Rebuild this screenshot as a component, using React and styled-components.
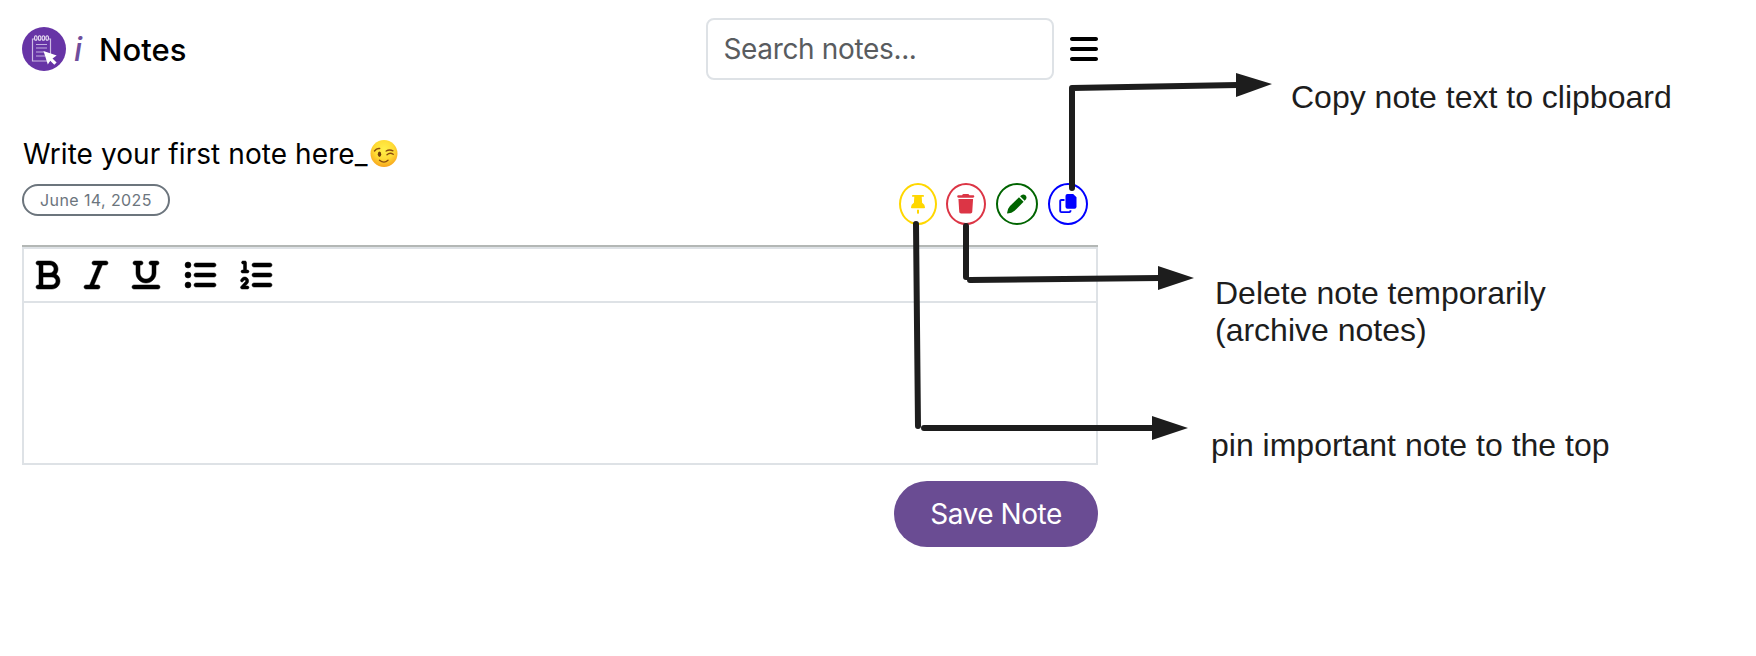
import React from 'react';
import styled, { createGlobalStyle } from 'styled-components';
import { FaBars, FaTrash, FaBold, FaItalic, FaUnderline, FaListUl, FaListOl } from 'react-icons/fa6';

const GlobalStyle = createGlobalStyle`
  *, *::before, *::after { box-sizing: border-box; }
  body { margin: 0; background: #fff; color: #000; font-family: Inter, "Liberation Sans", sans-serif; }
`;

const Page = styled.div`
  position: relative;
  width: 1756px;
  height: 656px;
  padding: 18px 0 0 22px;
  overflow: hidden;
`;

const NotesApp = styled.main`
  width: 1076px;
  display: flex;
  flex-direction: column;
`;

const Header = styled.header`
  height: 62px;
  display: flex;
  align-items: center;
  justify-content: space-between;
`;

const Brand = styled.div`
  display: flex;
  align-items: center;
`;

const BrandInitial = styled.span`
  margin: 1px 0 0 8px;
  width: 25px;
  font: italic 500 32px/40px Inter, sans-serif;
  color: #6f4e9c;
`;

const BrandName = styled.span`
  margin-top: 1px;
  font-size: 31px;
  line-height: 40px;
  font-weight: 500;
`;

const HeaderTools = styled.div`
  display: flex;
  align-items: center;
  gap: 16px;
`;

const SearchInput = styled.input`
  width: 348px;
  height: 62px;
  padding: 0 15.5px;
  border: 2px solid #dee2e6;
  border-radius: 8px;
  font: 400 28px/40px Inter, sans-serif;
  letter-spacing: -0.35px;
  outline: none;
  &::placeholder { color: #595c5f; opacity: 1; }
`;

const IconButton = styled.button`
  display: flex;
  padding: 0;
  border: 0;
  background: none;
  color: #000;
  svg { width: ${({ $width }) => $width}px; height: 32px; overflow: visible; }
`;

const NoteTitle = styled.h2`
  margin: 54px 0 0 1px;
  height: 40px;
  display: flex;
  align-items: center;
  gap: 2px;
  font-size: 28px;
  line-height: 40px;
  font-weight: 400;
  letter-spacing: 0.08px;
`;

const NoteMeta = styled.div`
  height: 44px;
  margin-top: 9px;
  padding-right: 10px;
  display: flex;
  justify-content: space-between;
`;

const DateBadge = styled.span`
  width: 148px;
  height: 32px;
  margin-top: 1px;
  border: 2px solid #6c757d;
  border-radius: 16px;
  display: flex;
  align-items: center;
  justify-content: center;
  color: #6c757d;
  font-size: 16px;
  letter-spacing: 0.4px;
`;

const Actions = styled.div`
  display: flex;
`;

const ActionButton = styled.button`
  width: ${({ $width }) => $width}px;
  height: 42px;
  margin-left: ${({ $gap }) => $gap}px;
  padding: 0;
  display: flex;
  align-items: center;
  justify-content: center;
  border: 2px solid currentColor;
  border-radius: 50%;
  background: #fff;
  color: ${({ $color }) => $color};
  font-size: 19.5px;
`;

const Editor = styled.section`
  margin-top: 18px;
  height: 220px;
  border-top: 2px solid #b3b7b5;
`;

const EditorFrame = styled.div`
  height: 218px;
  border: 2px solid #dee2e6;
`;

const Toolbar = styled.div`
  height: 54px;
  padding-left: 12px;
  display: flex;
  align-items: center;
  gap: 24px;
  border-bottom: 2px solid #dee2e6;
  svg { stroke: currentColor; stroke-width: 8px; }
`;

const SaveButton = styled.button`
  align-self: flex-end;
  width: 204px;
  height: 66px;
  margin-top: 16px;
  border: 0;
  border-radius: 33px;
  background: #6a4c93;
  color: #fff;
  font: 400 28px/40px Inter, sans-serif;
  letter-spacing: -0.45px;
`;

const AnnotationLayer = styled.svg`
  position: absolute;
  inset: 0;
  pointer-events: none;
`;

const Callout = styled.p`
  position: absolute;
  left: ${({ $x }) => $x}px;
  top: ${({ $y }) => $y}px;
  margin: 0;
  color: #1d1d1d;
  font: 400 32px/37px "Liberation Sans", Arial, sans-serif;
  white-space: nowrap;
`;

const Logo = () => (
  <svg width="44" height="44" viewBox="0 0 44 44" fill="none">
    <circle cx="22" cy="22" r="22" fill="#6734a6" />
    <path d="M12 12h-1.5v22H28M27 12h1.5v15" stroke="#cdbbe3" strokeWidth="1.2" />
    {[13.8, 17.6, 21.4, 25.2].map((x) => (
      <ellipse key={x} cx={x} cy="11" rx="1.3" ry="2.3" stroke="#e5daf0" strokeWidth="1.1" />
    ))}
    <path d="M14 17.5h11M14 21h11M14 25h8M14 29h9" stroke="#c3afe0" strokeWidth="1.1" />
    <path d="M21.5 24l13.2 4.6-4.2 2.8 4.1 4.1-2.3 2.3-4.1-4.1-2.4 3.9z" fill="#fff" />
  </svg>
);

const WinkFace = () => (
  <svg width="28" height="28" viewBox="0 0 28 28" fill="none">
    <defs>
      <radialGradient id="face" cx="50%" cy="35%" r="65%">
        <stop offset="0" stopColor="#fff04a" />
        <stop offset="0.55" stopColor="#ffdc35" />
        <stop offset="1" stopColor="#f8a51d" />
      </radialGradient>
    </defs>
    <circle cx="14" cy="13.5" r="13.5" fill="url(#face)" />
    <ellipse cx="9.5" cy="14.2" rx="1.7" ry="2.7" fill="#713d0b" />
    <path d="M4.5 11q2-3 5.2-2.5M16.2 11q3-2 6.8-.2M17 14.8q3-2.8 6.2-.5M9.500 20.200q4.500 3.800 8.500.1" stroke="#8b4c0e" strokeWidth="1.4" strokeLinecap="round" />
  </svg>
);

const PinIcon = () => (
  <svg width="14" height="19" viewBox="0 0 14 19" fill="currentColor">
    <path d="M1.8 0h10.400q.8 0 .8.900t-.8.900h-1.500l.4 6q2.900 1.600 2.900 4.400v.3q0 .7-.8.7H.8q-.8 0-.8-.7v-.3Q0 9.400 2.900 7.800l.4-6H1.800Q1 1.800 1 .9t.8-.9z" />
    <path d="M6 14.800h2v2.800q0 1.400-1 1.400t-1-1.400z" />
  </svg>
);

const PencilIcon = () => (
  <svg width="20" height="20" viewBox="0 0 20 20" fill="currentColor">
    <path d="M12 3.200 16.600 7.800 7.600 16.800Q4.800 19.300.6 19.600q-.5 0-.5-.5.3-4.300 2.900-7z" />
    <path d="M13.100 2.200q2.700-3.100 5.400-.9 2.400 2.800-.9 5.500z" />
  </svg>
);

const CopyIcon = () => (
  <svg width="18" height="20" viewBox="0 0 18 20" fill="none">
    <path d="M8.500 0h5.700L17.500 3.300V12.700q0 2-2 2h-7q-2 0-2-2V2q0-2 2-2z" fill="currentColor" />
    <path d="M5.500 6H2.500Q1.200 6 1.200 7.200V16.900Q1.200 18.100 2.500 18.100H10.300Q11.500 18.100 11.500 16.300" stroke="currentColor" strokeWidth="1.9" />
  </svg>
);

const actions = [
  { label: 'Pin', Icon: PinIcon, color: '#ffd700', width: 38, gap: 0 },
  { label: 'Delete', Icon: FaTrash, color: '#dc3545', width: 40, gap: 9 },
  { label: 'Edit', Icon: PencilIcon, color: '#006400', width: 42, gap: 10 },
  { label: 'Copy', Icon: CopyIcon, color: '#0000ff', width: 40, gap: 10 },
];

const tools = [
  { label: 'Bold', Icon: FaBold, width: 24 },
  { label: 'Italic', Icon: FaItalic, width: 24 },
  { label: 'Underline', Icon: FaUnderline, width: 28 },
  { label: 'Bulleted list', Icon: FaListUl, width: 32 },
  { label: 'Numbered list', Icon: FaListOl, width: 32 },
];

export default function App() {
  return (
    <Page>
      <GlobalStyle />
      <NotesApp>
        <Header>
          <Brand>
            <Logo />
            <BrandInitial>i</BrandInitial>
            <BrandName>Notes</BrandName>
          </Brand>
          <HeaderTools>
            <SearchInput placeholder="Search notes..." />
            <IconButton $width={28} aria-label="Menu"><FaBars /></IconButton>
          </HeaderTools>
        </Header>
        <NoteTitle>Write your first note here_<WinkFace /></NoteTitle>
        <NoteMeta>
          <DateBadge>June 14, 2025</DateBadge>
          <Actions>
            {actions.map(({ label, Icon, color, width, gap }) => (
              <ActionButton key={label} aria-label={label} $color={color} $width={width} $gap={gap}><Icon /></ActionButton>
            ))}
          </Actions>
        </NoteMeta>
        <Editor>
          <EditorFrame>
            <Toolbar>
              {tools.map(({ label, Icon, width }) => (
                <IconButton key={label} aria-label={label} $width={width}><Icon /></IconButton>
              ))}
            </Toolbar>
          </EditorFrame>
        </Editor>
        <SaveButton>Save Note</SaveButton>
      </NotesApp>
      <AnnotationLayer width="1756" height="656" fill="none" stroke="#1d1d1d" strokeWidth="6" strokeLinecap="round" strokeLinejoin="round">
        <path d="M1072 188V88L1238 85" />
        <path d="M966 226V277M970 280L1160 278" />
        <path d="M916 224L918 426M924 428H1154" />
        <g fill="#1d1d1d" stroke="none">
          <path d="M1236 73L1272 84L1236 97z" />
          <path d="M1158 266L1194 278L1158 290z" />
          <path d="M1152 416L1188 428L1152 440z" />
        </g>
      </AnnotationLayer>
      <Callout $x={1291} $y={79}>Copy note text to clipboard</Callout>
      <Callout $x={1215} $y={275}>Delete note temporarily<br />(archive notes)</Callout>
      <Callout $x={1211} $y={427}>pin important note to the top</Callout>
    </Page>
  );
}
